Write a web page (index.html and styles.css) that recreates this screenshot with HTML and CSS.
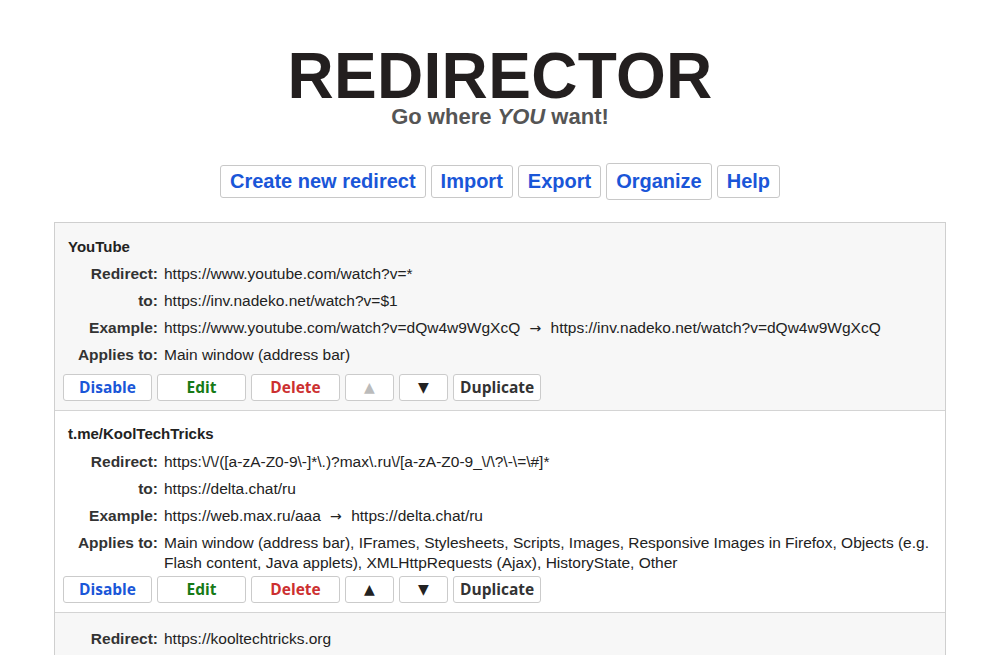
FILE: index.html
```html
<!DOCTYPE html>
<html lang="en">
<head>
<meta charset="utf-8">
<title>Redirector</title>
<link rel="stylesheet" href="styles.css">
</head>
<body>
<header class="head">
  <h1 class="logo">REDIRECTOR</h1>
  <p class="tagline">Go where <em>YOU</em> want!</p>
</header>
<nav class="menu">
  <button class="menu-btn">Create new redirect</button>
  <button class="menu-btn">Import</button>
  <button class="menu-btn">Export</button>
  <button class="menu-btn menu-btn-active">Organize</button>
  <button class="menu-btn">Help</button>
</nav>
<section class="list">
  <article class="item item-gray">
    <div class="details">
      <div class="item-title">YouTube</div>
      <div class="field"><span class="label">Redirect:</span><span class="value">https://www.youtube.com/watch?v=*</span></div>
      <div class="field"><span class="label">to:</span><span class="value">https://inv.nadeko.net/watch?v=$1</span></div>
      <div class="field"><span class="label">Example:</span><span class="value">https://www.youtube.com/watch?v=dQw4w9WgXcQ <span class="arrow">→</span> https://inv.nadeko.net/watch?v=dQw4w9WgXcQ</span></div>
      <div class="field"><span class="label">Applies to:</span><span class="value">Main window (address bar)</span></div>
    </div>
    <div class="actions">
      <button class="btn btn-wide btn-blue">Disable</button>
      <button class="btn btn-wide btn-green">Edit</button>
      <button class="btn btn-wide btn-red">Delete</button>
      <button class="btn btn-arrow btn-disabled">▲</button>
      <button class="btn btn-arrow">▼</button>
      <button class="btn btn-auto">Duplicate</button>
    </div>
  </article>
  <article class="item">
    <div class="details">
      <div class="item-title">t.me/KoolTechTricks</div>
      <div class="field"><span class="label">Redirect:</span><span class="value">https:\/\/([a-zA-Z0-9\-]*\.)?max\.ru\/[a-zA-Z0-9_\/\?\-\=\#]*</span></div>
      <div class="field"><span class="label">to:</span><span class="value">https://delta.chat/ru</span></div>
      <div class="field"><span class="label">Example:</span><span class="value">https://web.max.ru/aaa <span class="arrow">→</span> https://delta.chat/ru</span></div>
      <div class="field"><span class="label">Applies to:</span><span class="value">Main window (address bar), IFrames, Stylesheets, Scripts, Images, Responsive Images in Firefox, Objects (e.g. Flash content, Java applets), XMLHttpRequests (Ajax), HistoryState, Other</span></div>
    </div>
    <div class="actions">
      <button class="btn btn-wide btn-blue">Disable</button>
      <button class="btn btn-wide btn-green">Edit</button>
      <button class="btn btn-wide btn-red">Delete</button>
      <button class="btn btn-arrow">▲</button>
      <button class="btn btn-arrow">▼</button>
      <button class="btn btn-auto">Duplicate</button>
    </div>
  </article>
  <article class="item item-gray item-untitled">
    <div class="details details-short">
      <div class="field"><span class="label">Redirect:</span><span class="value">https://kooltechtricks.org</span></div>
    </div>
  </article>
</section>
</body>
</html>
```

FILE: styles.css
```css
html, body {
  margin: 0;
  padding: 0;
  background: #ffffff;
}
body {
  font-family: "Liberation Sans", Arial, sans-serif;
  color: #222;
  overflow: hidden;
}
.head {
  text-align: center;
  padding-top: 46px;
}
.logo {
  margin: 0;
  font-size: 64px;
  line-height: 60px;
  font-weight: bold;
  letter-spacing: 0.3px;
  color: #231f1f;
}
.tagline {
  margin: 0;
  font-size: 22px;
  line-height: 22px;
  font-weight: bold;
  color: #555;
}
.tagline em {
  font-style: italic;
}
.menu {
  display: flex;
  justify-content: center;
  align-items: center;
  gap: 5px;
  margin-top: 35px;
}
.menu-btn {
  font-family: "Liberation Sans", Arial, sans-serif;
  font-size: 20px;
  line-height: 23px;
  font-weight: bold;
  color: #1a56d8;
  background: #fff;
  border: 1px solid #c8c8c8;
  border-radius: 3px;
  padding: 4px 9px;
  margin: 0;
  cursor: pointer;
}
.menu-btn-active {
  padding: 6px 9px;
}
.list {
  margin: 22px 54px 0 54px;
  border: 1px solid #cfcfcf;
  border-bottom: none;
}
.item {
  background: #fff;
  padding: 9.5px 8px 9px 8px;
  border-bottom: 1px solid #d4d4d4;
}
.item-gray {
  background: #f7f7f7;
}
.item-untitled {
  padding-top: 12.5px;
}
.details {
  min-height: 141px;
}
.details-short {
  min-height: 0;
}
.item-title {
  font-size: 15px;
  line-height: 28px;
  font-weight: bold;
  color: #222;
  padding-left: 5px;
}
.field {
  display: flex;
  gap: 6px;
  font-size: 15.5px;
  line-height: 20px;
  padding: 3.5px 0;
}
.label {
  flex: 0 0 95px;
  text-align: right;
  font-weight: bold;
  color: #333;
}
.value {
  flex: 1 1 auto;
  color: #222;
}
.arrow {
  font-family: "DejaVu Sans", sans-serif;
  font-size: 14px;
  padding: 0 5px;
}
.actions {
  display: flex;
  gap: 5px;
}
.btn {
  font-family: "Open Sans", "Noto Sans", sans-serif;
  font-size: 15.5px;
  font-weight: bold;
  height: 27px;
  line-height: 25px;
  padding: 0;
  margin: 0;
  background: #fff;
  border: 1px solid #cbcbcb;
  border-radius: 3px;
  color: #333;
  cursor: pointer;
}
.btn-wide {
  width: 89px;
}
.btn-arrow {
  width: 49px;
  font-family: "DejaVu Sans", sans-serif;
  font-size: 14px;
  color: #222;
}
.btn-auto {
  padding: 0 6px;
}
.btn-blue {
  color: #1a56d8;
}
.btn-green {
  color: #177a17;
}
.btn-red {
  color: #cc3030;
}
.btn-disabled {
  color: #bbbbbb;
}
```
